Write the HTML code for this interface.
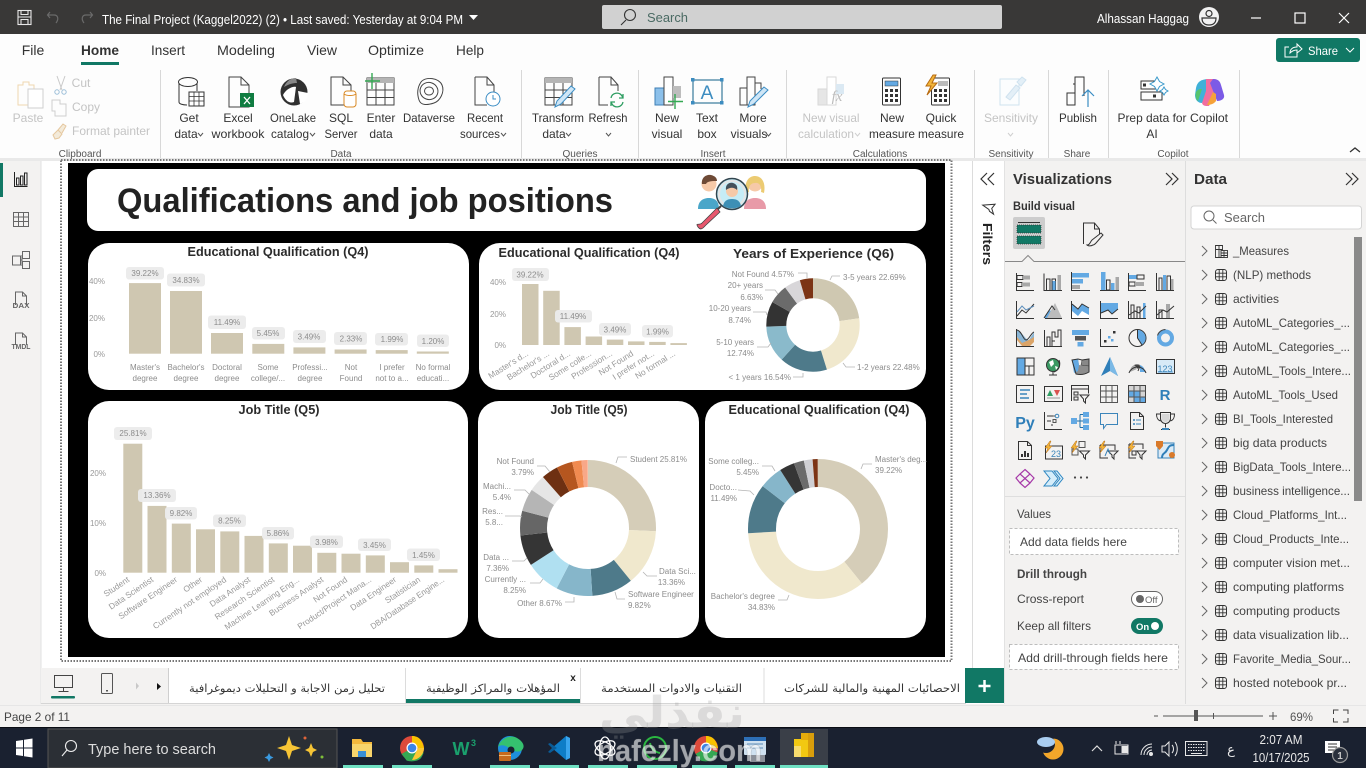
<!DOCTYPE html>
<html lang="en"><head><meta charset="utf-8"><title>Power BI</title>
<style>
html,body{margin:0;padding:0;width:1366px;height:768px;overflow:hidden;background:#fff}
svg{display:block;font-family:"Liberation Sans",sans-serif}
.r{font-size:12px;fill:#333;text-anchor:middle}
.d{font-size:12px;fill:#c4c4c4;text-anchor:middle}
.gp{font-size:10px;fill:#555;text-anchor:middle}
.tab{font-size:14px;fill:#333;text-anchor:middle}
.f{font-size:12px;fill:#444}
.v{font-size:12px;fill:#444}
.ct{font-size:13px;font-weight:bold;fill:#2b2b2b;text-anchor:middle}
.l{font-size:8px;fill:#8c8c8c;text-anchor:middle}
.le{font-size:8px;fill:#8c8c8c;text-anchor:end}
.ls{font-size:8px;fill:#8c8c8c}
.ax{font-size:8px;fill:#999;text-anchor:end}
.rot{font-size:8.4px;fill:#999;text-anchor:end}
.bx{fill:#ececec}
.bar{fill:#cfc7b1}
.ld{fill:none;stroke:#b5b5b5;stroke-width:.8}
.k{fill:none;stroke:#333;stroke-width:1}
.kl{fill:none;stroke:#555;stroke-width:1}
.kd{fill:none;stroke:#cfcfcf;stroke-width:1}
.b{fill:#63a9e3}
.bl{fill:none;stroke:#3e8fc9;stroke-width:1}
.g{fill:#a8a8a8}
.ar{font-family:"DejaVu Sans",sans-serif;font-size:11px;fill:#333;direction:rtl;text-anchor:middle}
.ws{fill:#fff;stroke:none}
.tb{fill:#fff;font-size:12.5px}
</style></head>
<body>
<svg width="1366" height="768" viewBox="0 0 1366 768" xmlns="http://www.w3.org/2000/svg">
<defs>
<symbol id="tbl" viewBox="0 0 12 12"><rect x=".5" y=".5" width="11" height="11" rx="2.5" fill="none" stroke="#333"/><path d="M4.2.5v11M7.8.5v11M.5 4.2h11M.5 7.8h11" fill="none" stroke="#333" stroke-width=".9"/></symbol>
<symbol id="chev" viewBox="0 0 8 12"><path d="M1 1l5 5-5 5" fill="none" stroke="#666"/></symbol>
</defs>

<!-- base -->
<rect width="1366" height="768" fill="#fff"/>
<!-- title bar -->
<rect width="1366" height="34" fill="#393837"/>
<g fill="none" stroke="#e8e8e8" stroke-width="1.1"><rect x="18" y="10.5" width="13" height="14"/><path d="M18 17h13M21 10.5v4h7v-4M21 24.5v-5h7v5"/></g>
<g fill="none" stroke="#6a6a6a" stroke-width="1.2"><path d="M50 12l-2.500 3 2.500 3M48 15h6c4 0 5 4 2 8M90 12l2.500 3-2.500 3M92 15h-6c-4 0-5 4-2 8"/></g>
<text class="tb" x="102" y="24" textLength="361" lengthAdjust="spacingAndGlyphs">The Final Project (Kaggel2022) (2) • Last saved: Yesterday at 9:04 PM</text>
<path d="M469 15h9l-4.500 5z" fill="#fff"/>
<rect x="602" y="5" width="400" height="24" rx="2" fill="#d1d1d1"/>
<circle cx="630" cy="15" r="5.500" fill="none" stroke="#333" stroke-width="1.1"/><path d="M626 20l-5 5" stroke="#333" stroke-width="1.1"/>
<text x="647" y="22" font-size="13" fill="#4a6a63" textLength="41" lengthAdjust="spacingAndGlyphs">Search</text>
<text class="tb" x="1097" y="23" textLength="92" lengthAdjust="spacingAndGlyphs">Alhassan Haggag</text>
<circle cx="1209" cy="17" r="10" fill="#f2f2f2"/><circle cx="1209" cy="13.500" r="3" fill="none" stroke="#333" stroke-width="1.200"/><path d="M1202 18h14c0 5-3 7-7 7s-7-2-7-7z" fill="none" stroke="#333" stroke-width="1.200"/>
<path d="M1251 18h10" stroke="#fff" stroke-width="1.200"/><rect x="1295" y="13" width="10" height="10" fill="none" stroke="#fff" stroke-width="1.200"/><path d="M1339 13l10 10M1349 13l-10 10" stroke="#fff" stroke-width="1.200"/>

<!-- ribbon -->
<rect y="34" width="1366" height="125" fill="#fdfdfd"/>
<rect y="158" width="1366" height="3" fill="#e9e9e9"/>
<text class="tab" x="33" y="55">File</text>
<text class="tab" x="100" y="55" font-weight="bold" textLength="38" lengthAdjust="spacingAndGlyphs">Home</text>
<rect x="81" y="62" width="38" height="3" fill="#117865"/>
<text class="tab" x="168" y="55" textLength="34" lengthAdjust="spacingAndGlyphs">Insert</text>
<text class="tab" x="246" y="55" textLength="58" lengthAdjust="spacingAndGlyphs">Modeling</text>
<text class="tab" x="322" y="55" textLength="30" lengthAdjust="spacingAndGlyphs">View</text>
<text class="tab" x="396" y="55" textLength="56" lengthAdjust="spacingAndGlyphs">Optimize</text>
<text class="tab" x="470" y="55" textLength="28" lengthAdjust="spacingAndGlyphs">Help</text>
<rect x="1276" y="38" width="84" height="24" rx="3" fill="#117865"/>
<g fill="none" stroke="#fff" stroke-width="1"><path d="M1289 47h-4v10h12v-4M1290 53c0-4 3-6 7-6v-3l5 5-5 4v-3c-3 0-5 1-7 3z"/><path d="M1346 48l4 4 4-4"/></g>
<text x="1308" y="55" font-size="12" fill="#fff" textLength="30" lengthAdjust="spacingAndGlyphs">Share</text>
<g stroke="#d8d8d8"><path d="M160.500 70v88M521.500 70v88M638.500 70v88M786.500 70v88M974.500 70v88M1048.500 70v88M1108.500 70v88M1239.500 70v88"/></g>
<g class="gp">
<text class="gp" x="80" y="157">Clipboard</text><text class="gp" x="341" y="157">Data</text><text class="gp" x="580" y="157">Queries</text><text class="gp" x="713" y="157">Insert</text><text class="gp" x="880" y="157">Calculations</text><text class="gp" x="1011" y="157">Sensitivity</text><text class="gp" x="1077" y="157">Share</text><text class="gp" x="1173" y="157">Copilot</text>
</g>
<path d="M1350 152l5-4 5 4" fill="none" stroke="#333" stroke-width="1.300"/>

<!-- ribbon labels -->
<text class="d" x="28" y="122">Paste</text>
<text class="d" x="81" y="87">Cut</text><text class="d" x="86" y="111">Copy</text><text class="d" x="111" y="135" textLength="78" lengthAdjust="spacingAndGlyphs">Format painter</text>
<text class="r" x="189" y="122">Get</text><text class="r" x="186" y="138">data</text><path d="M198 133l2.500 3 2.500-3" class="kl"/>
<text class="r" x="238" y="122">Excel</text><text class="r" x="238" y="138" textLength="53" lengthAdjust="spacingAndGlyphs">workbook</text>
<text class="r" x="293" y="122" textLength="46" lengthAdjust="spacingAndGlyphs">OneLake</text><text class="r" x="290" y="138" textLength="38" lengthAdjust="spacingAndGlyphs">catalog</text><path d="M310 133l2.500 3 2.500-3" class="kl"/>
<text class="r" x="341" y="122">SQL</text><text class="r" x="341" y="138" textLength="33" lengthAdjust="spacingAndGlyphs">Server</text>
<text class="r" x="381" y="122">Enter</text><text class="r" x="381" y="138">data</text>
<text class="r" x="429" y="122" textLength="52" lengthAdjust="spacingAndGlyphs">Dataverse</text>
<text class="r" x="485" y="122" textLength="36" lengthAdjust="spacingAndGlyphs">Recent</text><text class="r" x="480" y="138" textLength="40" lengthAdjust="spacingAndGlyphs">sources</text><path d="M501 133l2.500 3 2.500-3" class="kl"/>
<text class="r" x="558" y="122" textLength="52" lengthAdjust="spacingAndGlyphs">Transform</text><text class="r" x="554" y="138">data</text><path d="M566 133l2.500 3 2.500-3" class="kl"/>
<text class="r" x="608" y="122" textLength="39" lengthAdjust="spacingAndGlyphs">Refresh</text><path d="M606 133l2.500 3 2.500-3" class="kl"/>
<text class="r" x="667" y="122">New</text><text class="r" x="667" y="138">visual</text>
<text class="r" x="707" y="122">Text</text><text class="r" x="707" y="138">box</text>
<text class="r" x="753" y="122">More</text><text class="r" x="749" y="138">visuals</text><path d="M766 133l2.500 3 2.500-3" class="kl"/>
<text class="d" x="831" y="122" textLength="57" lengthAdjust="spacingAndGlyphs">New visual</text><text class="d" x="826" y="138" textLength="56" lengthAdjust="spacingAndGlyphs">calculation</text><path d="M855 133l2.500 3 2.500-3" class="kd"/>
<text class="r" x="892" y="122">New</text><text class="r" x="892" y="138" textLength="46" lengthAdjust="spacingAndGlyphs">measure</text>
<text class="r" x="941" y="122">Quick</text><text class="r" x="941" y="138" textLength="46" lengthAdjust="spacingAndGlyphs">measure</text>
<text class="d" x="1011" y="122" textLength="54" lengthAdjust="spacingAndGlyphs">Sensitivity</text><path d="M1008 133l2.500 3 2.500-3" class="kd"/>
<text class="r" x="1078" y="122" textLength="38" lengthAdjust="spacingAndGlyphs">Publish</text>
<text class="r" x="1152" y="122" textLength="69" lengthAdjust="spacingAndGlyphs">Prep data for</text><text class="r" x="1152" y="138">AI</text>
<text class="r" x="1209" y="122" textLength="38" lengthAdjust="spacingAndGlyphs">Copilot</text>

<!-- ribbon icons -->
<g fill="none" stroke-width="1">
 <!-- paste -->
 <path d="M18 85h5v-3h6v3h5v20H18z" stroke="#f0d7b0"/><rect x="29" y="90" width="15" height="19" stroke="#cfcfcf" fill="#fff" transform="translate(-1 -1)"/>
 <!-- cut, copy, painter -->
 <path d="M57 76l5 14M65 76l-5 14" stroke="#c9c9c9"/><circle cx="57" cy="92" r="2.200" stroke="#9dbfd9"/><circle cx="64" cy="92" r="2.200" stroke="#9dbfd9"/>
 <path d="M52 101h8v4h6v12H55v-5h-3z" stroke="#cfcfcf" transform="translate(0 -1)"/>
 <path d="M53 135l5-5 4 4-3 4-4 1zM58 130l5-6 3 2-4 7" stroke="#e5c79e" fill="#f3ead9"/>
 <!-- get data -->
 <path d="M179 83v19c0 2 4 3 8 3M197 83v8" stroke="#333"/><ellipse cx="188" cy="82" rx="9.500" ry="4.500" stroke="#333"/><rect x="189" y="92" width="15" height="14" stroke="#333" fill="#fff"/><path d="M189 96.500h15M189 101h15M194 92v14M199 92v14" stroke="#333" stroke-width=".8"/>
 <!-- excel -->
 <path d="M229 77h12l8 8v22h-20zM241 77v8h8" stroke="#444"/><rect x="240" y="93" width="14" height="14" fill="#107c41"/><path d="M244 97l6 7M250 97l-6 7" stroke="#fff" stroke-width="1.300"/>
 <!-- onelake -->
 <circle cx="294" cy="92" r="13.500" fill="#303030"/><path d="M283 95c3-6 10-9 13-8l-2 15c-5 2-9-2-11-7z" fill="#fff"/><path d="M298 91l10 2c0 5-3 9-8 11z" fill="#fff"/><path d="M296 78c-6 0-10 4-12 9 5-3 9-4 13-4z" fill="#888"/>
 <!-- sql -->
 <path d="M331 77h12l8 8v20h-20zM343 77v8h8" stroke="#444"/><rect x="344" y="91" width="12" height="16" rx="3" stroke="#d98a26" fill="#fff"/><path d="M344 94c3 2 9 2 12 0" stroke="#d98a26"/>
 <!-- enter data -->
 <rect x="367" y="78" width="27" height="27" stroke="#444"/><rect x="367" y="78" width="27" height="5" fill="#b5b5b5"/><path d="M367 90h27M367 97.500h27M376 83v22M385 83v22" stroke="#444"/><path d="M372 73v16M365 81h15" stroke="#34a853" stroke-width="1.400"/>
 <!-- dataverse -->
 <path d="M421 82c5-6 18-4 21 3s-2 16-8 18-13 3-15-3-2-12 2-18z" stroke="#444"/><ellipse cx="429" cy="91" rx="9" ry="8.500" stroke="#444" transform="rotate(20 429 91)"/><ellipse cx="429" cy="91" rx="4.500" ry="4" stroke="#444"/>
 <!-- recent -->
 <path d="M475 77h12l7 8v9M475 77v28h12M487 77v8h7" stroke="#444"/><circle cx="493" cy="99" r="7" stroke="#3b8dc4" fill="#fff"/><path d="M493 95v4h3" stroke="#3b8dc4"/>
 <!-- transform -->
 <rect x="545" y="78" width="27" height="27" stroke="#444"/><rect x="545" y="78" width="27" height="5" fill="#b5b5b5"/><path d="M545 90h27M545 97.500h27M554 83v22M563 83v22" stroke="#444"/><path d="M571 86l4 3-14 15-6 3 2-6z" stroke="#3b8dc4" fill="#cfe6f6"/>
 <!-- refresh -->
 <path d="M599 77h12l7 8v6M599 77v28h9M611 77v8h7" stroke="#444"/><path d="M611 98a6 6 0 0 1 11-2l1 2M623 102a6 6 0 0 1-11 2l-1-2M623 94v4h-4M611 106v-4h4" stroke="#2f9e62" stroke-width="1.300"/>
 <!-- new visual -->
 <rect x="655" y="88" width="9" height="17" fill="#8cc0ea" stroke="#3e7fb5"/><rect x="664" y="77" width="9" height="28" stroke="#444" fill="#fff"/><rect x="673" y="86" width="8" height="12" fill="#bdbdbd"/><path d="M675 94v15M668 101.500h15" stroke="#34a853" stroke-width="1.400"/>
 <!-- text box -->
 <rect x="693" y="80" width="29" height="23" stroke="#0f5f88"/><g fill="#3c8cc0"><rect x="691" y="78" width="3.500" height="3.500"/><rect x="720" y="78" width="3.500" height="3.500"/><rect x="691" y="101" width="3.500" height="3.500"/><rect x="720" y="101" width="3.500" height="3.500"/></g>
 <!-- more visuals -->
 <path d="M740 105V88h7v17zM747 105V77h8v28zM755 92v-9h6v6" stroke="#444"/><path d="M764 87l4 3-14 14-6 3 2-6z" stroke="#3b8dc4" fill="#cfe6f6"/>
 <!-- new visual calc -->
 <rect x="818" y="89" width="9" height="16" fill="#e6e6e6" stroke="#d8d8d8"/><rect x="827" y="77" width="9" height="28" fill="#fff" stroke="#d8d8d8"/><rect x="836" y="84" width="8" height="10" fill="#dbe9f3"/>
 <!-- new measure -->
 <rect x="882.500" y="78" width="18" height="27" rx="1" stroke="#333"/><rect x="885" y="81" width="13" height="5" fill="#63a9e3" stroke="#333" stroke-width=".5"/>
 <g fill="#333" stroke="none"><rect x="885" y="89" width="3" height="3"/><rect x="890" y="89" width="3" height="3"/><rect x="895" y="89" width="3" height="3"/><rect x="885" y="94" width="3" height="3"/><rect x="890" y="94" width="3" height="3"/><rect x="895" y="94" width="3" height="3"/><rect x="885" y="99" width="3" height="3"/><rect x="890" y="99" width="3" height="3"/><rect x="895" y="99" width="3" height="3"/></g>
 <!-- quick measure -->
 <rect x="931.500" y="78" width="18" height="27" rx="1" stroke="#333"/><rect x="938" y="81" width="10" height="5" fill="#bbb"/>
 <g fill="#333" stroke="none"><rect x="934" y="89" width="3" height="3"/><rect x="939" y="89" width="3" height="3"/><rect x="944" y="89" width="3" height="3"/><rect x="934" y="94" width="3" height="3"/><rect x="939" y="94" width="3" height="3"/><rect x="944" y="94" width="3" height="3"/><rect x="934" y="99" width="3" height="3"/><rect x="939" y="99" width="3" height="3"/><rect x="944" y="99" width="3" height="3"/></g>
 <path d="M933 75l-7 11h5l-4 9 10-12h-5l4-8z" fill="#f2b53a" stroke="#b76a10"/>
 <!-- sensitivity -->
 <rect x="1000" y="79" width="19" height="26" stroke="#cfe2ef" fill="#fbfdfe"/><path d="M1006 97l10-12 4 3-10 12zM1017 82l5-5 4 3-5 6z" stroke="#cfe2ef" fill="#e3eff7"/>
 <!-- publish -->
 <path d="M1067 105V93h8v12zM1075 105V77h9v19M1075 84h-2" stroke="#333"/><path d="M1088 107V90M1082 96l6-6 6 6" stroke="#3b8dc4" stroke-width="1.200"/>
 <!-- prep data -->
 <rect x="1141" y="81" width="15" height="8" stroke="#333"/><rect x="1141" y="92" width="21" height="8" stroke="#333"/><rect x="1143" y="83.500" width="3" height="3" fill="#333"/><rect x="1153" y="94.500" width="3" height="3" fill="#333"/>
 <path d="M1157 77l2.500 4.500 4.500 2.500-4.500 2.500-2.500 4.500-2.500-4.500-4.500-2.500 4.500-2.500z" stroke="#3b9acb" fill="#fff"/><path d="M1164 87l1.500 2.500 2.500 1.500-2.500 1.500-1.500 2.500-1.500-2.500-2.500-1.500 2.500-1.500z" stroke="#3b9acb" fill="#fff"/>
 <!-- copilot -->
 <path d="M1209 79c-8 0-12 3-13 9l-1 7c0 5 3 8 7 8l8-14 4-10z" fill="#3fb1d8" stroke="none"/><path d="M1206 79h8c3 0 4 2 5 5l-10 22c-4 0-6 0-7-3l4-12z" fill="#f06ea0" stroke="none"/><path d="M1213 79c5 0 7 2 8 6l3 10c1 4-3 6-7 6l-7-18z" fill="#7c5be6" stroke="none"/><path d="M1196 92c2-3 4-3 6-3l-4 12c-2-1-3-5-2-9z" fill="#56c46e" stroke="none"/><path d="M1216 101c-2 3-6 4-9 4l6-13 3 2z" fill="#f6a23a" stroke="none"/>
</g>
<text x="707" y="99" font-size="19" fill="#3c8cc0" text-anchor="middle">A</text>
<text x="837" y="101" font-size="15" font-family="Liberation Serif" font-style="italic" fill="#bcbcbc" text-anchor="middle">fx</text>

<!-- left rail -->
<rect x="0" y="161" width="41" height="544" fill="#f3f2f1"/><rect x="40.500" y="161" width="1" height="544" fill="#e2e2e2"/>
<rect x="0" y="163" width="3" height="34" fill="#117865"/>
<g fill="none" stroke="#222" stroke-width="1"><path d="M14.500 172v14.500h13"/><rect x="16.500" y="178" width="2.500" height="7"/><rect x="20.500" y="176" width="2.500" height="9"/><rect x="24.500" y="173" width="2.500" height="12"/></g>
<g fill="none" stroke="#666" stroke-width="1"><rect x="13.500" y="212.500" width="15" height="14"/><path d="M13.500 217h15M13.500 221.500h15M18.500 212.500v14M23.500 212.500v14"/>
<rect x="12.500" y="256" width="8" height="9"/><rect x="22.500" y="251.500" width="7" height="7"/><rect x="22.500" y="261.500" width="7" height="7"/><path d="M20 260h2.500M22 255v11"/>
<path d="M15.500 305v-13h7l4 4v10M22.500 292v4h4"/><path d="M15.500 345v-12h7l4 4v8M22.500 333v4h4"/></g>
<text x="21" y="308" font-size="7" fill="#666" text-anchor="middle" font-weight="bold" textLength="17" lengthAdjust="spacingAndGlyphs">DAX</text>
<text x="21" y="349" font-size="7" fill="#666" text-anchor="middle" font-weight="bold" textLength="19" lengthAdjust="spacingAndGlyphs">TMDL</text>

<!-- report frame -->
<rect x="61" y="160" width="890.500" height="501" fill="none" stroke="#777" stroke-width="2" stroke-dasharray="1.500 1.500"/>
<rect x="68" y="163" width="877" height="494" fill="#000"/>

<!-- title card -->
<rect x="87" y="169" width="839" height="62" rx="11" fill="#fff"/>
<text x="117" y="212" font-size="34" font-weight="bold" fill="#222" textLength="496" lengthAdjust="spacingAndGlyphs">Qualifications and job positions</text>
<!-- people icon -->
<g>
 <circle cx="709" cy="184" r="7.500" fill="#f6c9a8"/><path d="M702 184c-1-7 5-10 9-9s6 3 6 6c-4 0-10 0-11 3z" fill="#6e4a36"/>
 <path d="M698 209c0-8 5-11 11-11s10 3 10 11z" fill="#4aa6c9"/>
 <circle cx="755" cy="184" r="7.500" fill="#f6c9a8"/><path d="M746 193c-2-10 2-17 9-17s11 7 9 17l-3-1c1-6-2-10-6-9-4 0-7 3-6 9z" fill="#eccb72"/>
 <path d="M744 209c0-8 5-11 11-11s11 3 11 11z" fill="#e89aa8"/>
 <circle cx="732" cy="194" r="15.500" fill="#c6ecf6" stroke="#33454f" stroke-width="1.500"/><circle cx="732" cy="194" r="13" fill="none" stroke="#e5e5e5" stroke-width="2"/>
 <circle cx="732" cy="191" r="6" fill="#f6c9a8"/><path d="M726 190c-1-6 4-8 7-7s5 3 4 7c-3-3-7-3-11 0z" fill="#44505a"/><path d="M723 206c1-5 4-7 9-7s8 2 9 7c-5 3-13 3-18 0z" fill="#3d8fb5"/>
 <path d="M721 206l-3 3" stroke="#444" stroke-width="2"/><path d="M717 208l-15 15c-3 3-7-1-4 4 3 4 5 1 8-2l14-13z" fill="#e8576e" stroke="#444" stroke-width=".8"/>
</g>

<!-- cards -->
<g fill="#fff">
 <rect x="88" y="243" width="381" height="147" rx="21"/>
 <rect x="479" y="243" width="447" height="147" rx="21"/>
 <rect x="88" y="401" width="380" height="237" rx="21"/>
 <rect x="478" y="401" width="221" height="237" rx="21"/>
 <rect x="705" y="401" width="221" height="237" rx="21"/>
</g>
<text class="ct" x="278" y="256" textLength="181" lengthAdjust="spacingAndGlyphs">Educational Qualification (Q4)</text>
<text class="ct" x="589" y="257" textLength="181" lengthAdjust="spacingAndGlyphs">Educational Qualification (Q4)</text>
<text class="ct" x="813.500" y="258" font-size="14" textLength="161" lengthAdjust="spacingAndGlyphs">Years of Experience (Q6)</text>
<text class="ct" x="279" y="414" textLength="81" lengthAdjust="spacingAndGlyphs">Job Title (Q5)</text>
<text class="ct" x="589" y="414" textLength="77" lengthAdjust="spacingAndGlyphs">Job Title (Q5)</text>
<text class="ct" x="819" y="414" textLength="181" lengthAdjust="spacingAndGlyphs">Educational Qualification (Q4)</text>

<!-- card 1 chart -->
<text class="ax" x="105" y="284">40%</text><text class="ax" x="105" y="321">20%</text><text class="ax" x="105" y="357">0%</text>
<g class="bar">
<rect x="129" y="283.100" width="32" height="70.600"/><rect x="170" y="291" width="32" height="62.700"/><rect x="211" y="333" width="32" height="20.700"/><rect x="252.300" y="343.900" width="32" height="9.800"/><rect x="293.400" y="347.400" width="32" height="6.300"/><rect x="334.600" y="349.500" width="32" height="4.200"/><rect x="375.700" y="350.100" width="32" height="3.600"/><rect x="416.800" y="351.500" width="32" height="2.200"/>
</g>
<g class="bx">
<rect x="126" y="267" width="38" height="12.500" rx="3"/><rect x="167" y="273.500" width="38" height="13" rx="3"/><rect x="208" y="315.500" width="38" height="13.500" rx="3"/><rect x="252" y="327" width="33" height="12.500" rx="3"/><rect x="293" y="330" width="33" height="13" rx="3"/><rect x="334" y="332" width="33" height="13" rx="3"/><rect x="375" y="333" width="33" height="12.500" rx="3"/><rect x="417" y="334.500" width="32" height="12.500" rx="3"/>
</g>
<text class="l" x="145" y="276">39.22%</text><text class="l" x="186" y="283">34.83%</text><text class="l" x="227" y="325">11.49%</text><text class="l" x="268" y="336">5.45%</text><text class="l" x="309" y="339.500">3.49%</text><text class="l" x="351" y="341.500">2.33%</text><text class="l" x="392" y="342">1.99%</text><text class="l" x="433" y="344">1.20%</text>
<g class="l">
<text class="l" x="145" y="370">Master's</text><text class="l" x="145" y="381">degree</text>
<text class="l" x="186" y="370">Bachelor's</text><text class="l" x="186" y="381">degree</text>
<text class="l" x="227" y="370">Doctoral</text><text class="l" x="227" y="381">degree</text>
<text class="l" x="268" y="370">Some</text><text class="l" x="268" y="381">college/...</text>
<text class="l" x="310" y="370">Professi...</text><text class="l" x="310" y="381">degree</text>
<text class="l" x="351" y="370">Not</text><text class="l" x="351" y="381">Found</text>
<text class="l" x="392" y="370">I prefer</text><text class="l" x="392" y="381">not to a...</text>
<text class="l" x="433" y="370">No formal</text><text class="l" x="433" y="381">educati...</text>
</g>

<!-- card 2 chart -->
<text class="ax" x="506" y="285">40%</text><text class="ax" x="506" y="317">20%</text><text class="ax" x="506" y="348">0%</text>
<g class="bar">
<rect x="522" y="284" width="16.500" height="61"/><rect x="543.200" y="290.800" width="16.500" height="54.200"/><rect x="564.400" y="327.100" width="16.500" height="17.900"/><rect x="585.600" y="336.500" width="16.500" height="8.500"/><rect x="606.800" y="339.600" width="16.500" height="5.400"/><rect x="628" y="341.400" width="16.500" height="3.600"/><rect x="649.200" y="341.900" width="16.500" height="3.100"/><rect x="670.400" y="343.100" width="16.500" height="1.900"/>
</g>
<g class="bx" opacity=".95"><rect x="512" y="268" width="37" height="13" rx="3"/><rect x="555" y="310" width="37" height="12.500" rx="3"/><rect x="599" y="323" width="32" height="12.500" rx="3"/><rect x="642" y="325" width="31" height="12.500" rx="3"/></g>
<text class="l" x="530" y="277.500">39.22%</text><text class="l" x="573" y="319">11.49%</text><text class="l" x="615" y="332.500">3.49%</text><text class="l" x="657.500" y="334.500">1.99%</text>
<text class="rot" transform="translate(529 355) rotate(-32)">Master's d...</text>
<text class="rot" transform="translate(550 355) rotate(-32)">Bachelor's ...</text>
<text class="rot" transform="translate(571 355) rotate(-32)">Doctoral d...</text>
<text class="rot" transform="translate(592 355) rotate(-32)">Some colle...</text>
<text class="rot" transform="translate(613 355) rotate(-32)">Profession...</text>
<text class="rot" transform="translate(634 355) rotate(-32)">Not Found</text>
<text class="rot" transform="translate(655 355) rotate(-32)">I prefer not...</text>
<text class="rot" transform="translate(676 355) rotate(-32)">No formal ...</text>

<!-- card 2 donut -->
<g fill="none" stroke-width="20" transform="rotate(-90 813 325)">
<circle cx="813" cy="325" r="36.700" pathLength="100" stroke="#cfc8b1" stroke-dasharray="22.69 100"/>
<circle cx="813" cy="325" r="36.700" pathLength="100" stroke="#f0e8cd" stroke-dasharray="22.48 100" stroke-dashoffset="-22.69"/>
<circle cx="813" cy="325" r="36.700" pathLength="100" stroke="#4e7a8a" stroke-dasharray="16.54 100" stroke-dashoffset="-45.17"/>
<circle cx="813" cy="325" r="36.700" pathLength="100" stroke="#8abacb" stroke-dasharray="12.74 100" stroke-dashoffset="-61.71"/>
<circle cx="813" cy="325" r="36.700" pathLength="100" stroke="#333333" stroke-dasharray="8.74 100" stroke-dashoffset="-74.45"/>
<circle cx="813" cy="325" r="36.700" pathLength="100" stroke="#6b6b6b" stroke-dasharray="6.63 100" stroke-dashoffset="-83.19"/>
<circle cx="813" cy="325" r="36.700" pathLength="100" stroke="#d8d6d9" stroke-dasharray="5.61 100" stroke-dashoffset="-89.82"/>
<circle cx="813" cy="325" r="36.700" pathLength="100" stroke="#7c3415" stroke-dasharray="4.57 100" stroke-dashoffset="-95.43"/>
</g>
<path class="ld" d="M830 280l2-4h8M798 273h9v5M765 290h10l3 4M753 312h13l1 3M757 347h11l3-4M793 377h10v-4M843 363l3 4h9"/>
<text class="le" x="794" y="277">Not Found 4.57%</text>
<text class="le" x="763" y="288">20+ years</text><text class="le" x="763" y="300">6.63%</text>
<text class="le" x="751" y="311">10-20 years</text><text class="le" x="751" y="323">8.74%</text>
<text class="le" x="754" y="345">5-10 years</text><text class="le" x="754" y="356">12.74%</text>
<text class="le" x="791" y="380">&lt; 1 years 16.54%</text>
<text class="ls" x="843" y="280">3-5 years 22.69%</text>
<text class="ls" x="857" y="370">1-2 years 22.48%</text>

<!-- card 3 chart -->
<text class="ax" x="106" y="476">20%</text><text class="ax" x="106" y="526">10%</text><text class="ax" x="106" y="576">0%</text>
<g class="bar">
<rect x="123.300" y="443.700" width="19" height="129"/><rect x="147.500" y="505.900" width="19" height="66.800"/><rect x="171.800" y="523.600" width="19" height="49.100"/><rect x="196" y="529.300" width="19" height="43.400"/><rect x="220.300" y="531.400" width="19" height="41.300"/><rect x="244.500" y="535.900" width="19" height="36.800"/><rect x="268.800" y="543.400" width="19" height="29.300"/><rect x="293" y="545.700" width="19" height="27"/><rect x="317.300" y="552.800" width="19" height="19.900"/><rect x="341.500" y="553.700" width="19" height="19"/><rect x="365.800" y="555.400" width="19" height="17.300"/><rect x="390" y="562.200" width="19" height="10.500"/><rect x="414.300" y="565.400" width="19" height="7.300"/><rect x="438.500" y="569.200" width="19" height="3.500"/>
</g>
<g class="bx" opacity=".95"><rect x="114" y="427" width="38" height="13" rx="3"/><rect x="138" y="489" width="38" height="13" rx="3"/><rect x="165" y="507" width="32" height="12.500" rx="3"/><rect x="213" y="514.500" width="33" height="12.500" rx="3"/><rect x="262" y="527" width="32" height="12.500" rx="3"/><rect x="310" y="535.500" width="33" height="12.500" rx="3"/><rect x="358" y="538.500" width="33" height="12.500" rx="3"/><rect x="407" y="548.500" width="33" height="12.500" rx="3"/></g>
<text class="l" x="133" y="436">25.81%</text><text class="l" x="157" y="498">13.36%</text><text class="l" x="181" y="516">9.82%</text><text class="l" x="229.500" y="523.500">8.25%</text><text class="l" x="278" y="536">5.86%</text><text class="l" x="326.500" y="545">3.98%</text><text class="l" x="374.500" y="548">3.45%</text><text class="l" x="423.500" y="558">1.45%</text>
<text class="rot" transform="translate(130 581) rotate(-34)">Student</text>
<text class="rot" transform="translate(154 581) rotate(-34)">Data Scientist</text>
<text class="rot" transform="translate(178 581) rotate(-34)">Software Engineer</text>
<text class="rot" transform="translate(203 581) rotate(-34)">Other</text>
<text class="rot" transform="translate(227 581) rotate(-34)">Currently not employed</text>
<text class="rot" transform="translate(251 581) rotate(-34)">Data Analyst</text>
<text class="rot" transform="translate(275 581) rotate(-34)">Research Scientist</text>
<text class="rot" transform="translate(300 581) rotate(-34)" textLength="88" lengthAdjust="spacingAndGlyphs">Machine Learning Eng...</text>
<text class="rot" transform="translate(324 581) rotate(-34)">Business Analyst</text>
<text class="rot" transform="translate(348 581) rotate(-34)">Not Found</text>
<text class="rot" transform="translate(372 581) rotate(-34)" textLength="87" lengthAdjust="spacingAndGlyphs">Product/Project Mana...</text>
<text class="rot" transform="translate(397 581) rotate(-34)">Data Engineer</text>
<text class="rot" transform="translate(421 581) rotate(-34)">Statistician</text>
<text class="rot" transform="translate(445 581) rotate(-34)" textLength="87" lengthAdjust="spacingAndGlyphs">DBA/Database Engine...</text>

<!-- card 4 donut -->
<g fill="none" stroke-width="27" transform="rotate(-90 588 528)">
<circle cx="588" cy="528" r="54.500" pathLength="100" stroke="#d5cdb8" stroke-dasharray="25.81 100"/>
<circle cx="588" cy="528" r="54.500" pathLength="100" stroke="#f0e8cd" stroke-dasharray="13.36 100" stroke-dashoffset="-25.81"/>
<circle cx="588" cy="528" r="54.500" pathLength="100" stroke="#4e7a8a" stroke-dasharray="9.82 100" stroke-dashoffset="-39.17"/>
<circle cx="588" cy="528" r="54.500" pathLength="100" stroke="#86b6ca" stroke-dasharray="8.67 100" stroke-dashoffset="-48.99"/>
<circle cx="588" cy="528" r="54.500" pathLength="100" stroke="#b0e0f1" stroke-dasharray="8.25 100" stroke-dashoffset="-57.66"/>
<circle cx="588" cy="528" r="54.500" pathLength="100" stroke="#353535" stroke-dasharray="7.36 100" stroke-dashoffset="-65.91"/>
<circle cx="588" cy="528" r="54.500" pathLength="100" stroke="#666666" stroke-dasharray="5.86 100" stroke-dashoffset="-73.27"/>
<circle cx="588" cy="528" r="54.500" pathLength="100" stroke="#b5b5b5" stroke-dasharray="5.4 100" stroke-dashoffset="-79.13"/>
<circle cx="588" cy="528" r="54.500" pathLength="100" stroke="#e6e6e6" stroke-dasharray="4 100" stroke-dashoffset="-84.53"/>
<circle cx="588" cy="528" r="54.500" pathLength="100" stroke="#6e3012" stroke-dasharray="3.98 100" stroke-dashoffset="-88.53"/>
<circle cx="588" cy="528" r="54.500" pathLength="100" stroke="#b5561f" stroke-dasharray="3.79 100" stroke-dashoffset="-92.51"/>
<circle cx="588" cy="528" r="54.500" pathLength="100" stroke="#f08a50" stroke-dasharray="2.2 100" stroke-dashoffset="-96.3"/>
<circle cx="588" cy="528" r="54.500" pathLength="100" stroke="#f8a888" stroke-dasharray="1.5 100" stroke-dashoffset="-98.5"/>
</g>
<path class="ld" d="M616 463l2-6h9M643 572l4 4h10M615 592l2 7h8M565 602h9v-5M530 583h10l3-4M512 561h12l3-3M505 516h15l2 1M514 490h11l4 4M537 466h8l5 6"/>
<text class="ls" x="630" y="462">Student 25.81%</text>
<text class="ls" x="659" y="574">Data Sci...</text><text class="le" x="685" y="585">13.36%</text>
<text class="ls" x="628" y="597">Software Engineer</text><text class="ls" x="628" y="608">9.82%</text>
<text class="le" x="562" y="606">Other 8.67%</text>
<text class="le" x="526" y="582">Currently ...</text><text class="le" x="526" y="593">8.25%</text>
<text class="le" x="509" y="560">Data ...</text><text class="le" x="509" y="571">7.36%</text>
<text class="le" x="503" y="514">Res...</text><text class="le" x="503" y="525">5.8...</text>
<text class="le" x="511" y="489">Machi...</text><text class="le" x="511" y="500">5.4%</text>
<text class="le" x="534" y="464">Not Found</text><text class="le" x="534" y="475">3.79%</text>

<!-- card 5 donut -->
<g fill="none" stroke-width="28" transform="rotate(-90 818 529)">
<circle cx="818" cy="529" r="56" pathLength="100" stroke="#d5cdb8" stroke-dasharray="39.22 100"/>
<circle cx="818" cy="529" r="56" pathLength="100" stroke="#f0e8cd" stroke-dasharray="34.83 100" stroke-dashoffset="-39.22"/>
<circle cx="818" cy="529" r="56" pathLength="100" stroke="#4e7a8a" stroke-dasharray="11.49 100" stroke-dashoffset="-74.05"/>
<circle cx="818" cy="529" r="56" pathLength="100" stroke="#86b6ca" stroke-dasharray="5.45 100" stroke-dashoffset="-85.54"/>
<circle cx="818" cy="529" r="56" pathLength="100" stroke="#353535" stroke-dasharray="3.49 100" stroke-dashoffset="-90.99"/>
<circle cx="818" cy="529" r="56" pathLength="100" stroke="#6b6b6b" stroke-dasharray="2.33 100" stroke-dashoffset="-94.48"/>
<circle cx="818" cy="529" r="56" pathLength="100" stroke="#cfcfd3" stroke-dasharray="1.99 100" stroke-dashoffset="-96.81"/>
<circle cx="818" cy="529" r="56" pathLength="100" stroke="#7c3415" stroke-dasharray="1.2 100" stroke-dashoffset="-98.8"/>
</g>
<path class="ld" d="M861 469l2-5h9M762 466h10l3 5M738 490l12 1 4 4M778 600h9l2-5"/>
<text class="ls" x="875" y="462">Master's deg...</text><text class="ls" x="875" y="473">39.22%</text>
<text class="le" x="759" y="464">Some colleg...</text><text class="le" x="759" y="475">5.45%</text>
<text class="le" x="737" y="490">Docto...</text><text class="le" x="737" y="501">11.49%</text>
<text class="le" x="775" y="599">Bachelor's degree</text><text class="le" x="775" y="610">34.83%</text>

<!-- filters pane -->
<rect x="972" y="161" width="1" height="507" fill="#dcdcdc"/>
<path d="M987 173l-6 6 6 6M994 173l-6 6 6 6" fill="none" stroke="#333" stroke-width="1.200"/>
<path d="M984 203l12 3-4.500 3v6l-3-4v-2z" fill="none" stroke="#333" transform="rotate(-18 990 208)"/>
<text transform="translate(983 223) rotate(90)" font-size="13" font-weight="bold" fill="#222" textLength="42" lengthAdjust="spacingAndGlyphs">Filters</text>

<!-- visualizations pane -->
<rect x="1004" y="161" width="182" height="544" fill="#f3f2f1"/>
<rect x="1004" y="161" width="1" height="544" fill="#e2e2e2"/>
<rect x="1185" y="161" width="1" height="544" fill="#dddddd"/>
<text x="1013" y="184" font-size="15" font-weight="bold" fill="#333" textLength="99" lengthAdjust="spacingAndGlyphs">Visualizations</text>
<path d="M1166 173l6 6-6 6M1172 173l6 6-6 6" fill="none" stroke="#333" stroke-width="1.200"/>
<text x="1013" y="210" font-size="11.500" font-weight="bold" fill="#333" textLength="62" lengthAdjust="spacingAndGlyphs">Build visual</text>
<rect x="1013" y="217" width="32" height="32" rx="2" fill="#cdcdcd"/>
<path d="M1018 222.500h22" stroke="#333"/><rect x="1017" y="225" width="24" height="8" fill="#117865" stroke="#333" stroke-dasharray="1 1" stroke-width=".7"/><rect x="1017" y="236" width="24" height="8" fill="#117865" stroke="#333" stroke-dasharray="1 1" stroke-width=".7"/>
<path d="M1083.500 244v-21h11l5 6v5M1094.500 223v6h5M1093 245c-4 2-6 0-6 0 3 0 3-3 5-5l9-7 2 2-7 8c-1 1-2 2-3 2z" fill="none" stroke="#333"/>
<path d="M1005 261.500h17l6-6 6 6h151" fill="none" stroke="#888"/>
<rect x="1005" y="496" width="180" height="1" fill="#dedede"/>

<!-- gallery icons -->
<g transform="translate(1016 273)"><path class="k" d="M.5 0v17.500H18"/><path class="k" d="M1 2.500h6v4H1zM1 9.500h5v4H1z"/><rect class="g" x="7" y="2.500" width="7" height="4"/><rect class="g" x="6" y="9.500" width="8" height="4"/></g>
<g transform="translate(1044 273)"><path class="k" d="M0 .5v17h18M2.500 17V6h3.500v11M8 17V6h3.500v11"/><rect class="b" x="8.500" y="8" width="3" height="9"/><rect class="g" x="13.500" y="2" width="3.500" height="15"/></g>
<g transform="translate(1071 272)"><path class="k" d="M.5 0v18.500H19" stroke-width="2"/><rect class="b" x="1" y="1" width="17" height="4.500" /><rect class="b" x="1" y="7" width="11" height="4.500"/><rect class="g" x="1" y="13" width="8" height="4"/></g>
<g transform="translate(1100 272)"><rect class="b" x="1" y="0" width="4.500" height="18"/><rect class="k" x="6.500" y="8" width="3.500" height="10"/><rect class="b" x="11" y="11" width="3.500" height="7"/><rect class="g" x="15.500" y="5" width="3.500" height="13"/><path class="k" d="M0 18.500h19"/></g>
<g transform="translate(1128 273)"><path class="k" d="M.5 0v17.500H18"/><rect class="b" x="1" y="2" width="8" height="4"/><rect class="k" x="9" y="2" width="7" height="4"/><rect class="k" x="1" y="9" width="6" height="4"/><rect class="g" x="7" y="9" width="9" height="4"/></g>
<g transform="translate(1156 273)"><path class="k" d="M.5 0v17.500H18M3 17V5h3v12M11 17V3h3.500v14"/><rect class="b" x="7" y="2" width="3" height="15"/><rect class="g" x="15" y="6" width="2.500" height="11"/></g>

<g transform="translate(1016 301)"><path class="k" d="M.5 0v17.500H18M1 15l5-6 4 3 8-9"/><path d="M1 11l5-6 4 4 8-4" fill="none" stroke="#5f90bd"/></g>
<g transform="translate(1044 301)"><path d="M0 17l6-8 5 8z" class="b"/><path d="M3 17l8-15 7 15z" fill="#bcbcbc"/><path d="M1 17.500h17" class="k"/><path class="k" d="M0 17l8-12 3 4"/></g>
<g transform="translate(1071 301)"><path class="b" d="M1 3l6 5 4-5 7 4v10H1z"/><path d="M1 10l6 5 4-5 7 4v3H1z" fill="#fff"/><path class="k" d="M.5 0v17.500H18M1 3l6 5 4-5 7 4"/></g>
<g transform="translate(1100 301)"><path class="b" d="M1 2h17v6l-6 5-4-4-7 3z"/><path class="k" d="M.5 0v17.500H18M1 12l7-3 4 4 6-5"/></g>
<g transform="translate(1128 301)"><path class="k" d="M.5 0v17.500H18M3 17V4h3v13M9 17V6h3v11"/><rect class="b" x="15" y="2" width="2.500" height="15"/><path class="k" d="M1 14l6-4 4 2 7-7"/></g>
<g transform="translate(1156 301)"><path class="k" d="M.5 0v17.500H18M3 17V9h3v8"/><rect class="g" x="10" y="3" width="4" height="14"/><path class="k" d="M1 14l6-5 4 2 7-6"/></g>

<g transform="translate(1016 329)"><path class="k" d="M.5 0v17.500H18"/><path d="M1 1l4 3c3 2 5 7 8 7l5-8v5l-3 8H8C4 16 2 8 1 8z" fill="#8ab6d6"/><path d="M1 8l5 6 7-3 5-3v5l-4 4H6L1 11z" fill="#dba468"/><path d="M1 1c5 1 6 10 9 10s5-7 8-8" fill="none" stroke="#333"/></g>
<g transform="translate(1044 329)"><path class="k" d="M.5 1v16.500H18M3 17V8h3v9M8 17V3h3v5h3V1h3v16M8 12h3"/></g>
<g transform="translate(1071 329)"><rect class="b" x="1" y="1" width="17" height="5"/><path d="M4 7h11v4.500H4z" fill="#555"/><rect class="b" x="6.500" y="13" width="6" height="4.500"/></g>
<g transform="translate(1100 329)"><path class="k" d="M.5 0v17.500H18"/><rect x="4" y="11" width="2.500" height="2.500" fill="#333"/><rect x="8" y="7" width="2.500" height="2.500" class="b"/><rect x="11" y="10" width="2.500" height="2.500" class="b"/><rect x="13" y="2" width="2.500" height="2.500" fill="#333"/></g>
<g transform="translate(1128 329)"><circle class="k" cx="9.500" cy="9" r="8.500"/><path class="b" d="M9.500 9V1a8 8 0 0 1 4 15z"/><path class="k" d="M9.500 1v8l4.500 7"/></g>
<g transform="translate(1156 329)"><circle cx="9.500" cy="9" r="6.500" fill="none" stroke="#63a9e3" stroke-width="4"/><path d="M9.500 .5a8.500 8.500 0 0 0-8 6" fill="none" stroke="#444"/></g>

<g transform="translate(1016 357)"><rect class="b" x="1" y="1" width="8" height="17"/><rect class="k" x="1" y="1" width="17" height="17"/><path class="k" d="M9 1v17M9 9h9M13 9v9"/></g>
<g transform="translate(1044 357)"><circle cx="9" cy="8" r="6.500" fill="#3a9a63" stroke="#333"/><path d="M5 5l4-2 1 4-3 3zM11 9l3 1-2 3z" fill="#fff"/><path class="k" d="M15 3c2 5 0 10-5 12M9 15v3M5 18h8"/></g>
<g transform="translate(1071 357)"><path d="M1 3l6-1 1 6 10 1v6c-5 3-9 3-13 2z" fill="#8d8d8d"/><path d="M1 3l6-1 1 6-1 6-4 2z" fill="#63a9e3"/><path d="M11 3l7-1v7l-8-1z" fill="#888" stroke="#333" stroke-width=".5"/><path d="M1 3l6-1 4 1 7-1v13c-5 3-9 3-13 2z" fill="none" stroke="#333"/></g>
<g transform="translate(1100 357)"><path d="M10 0L18 19l-8-5-9 5z" fill="#2f7fb9"/><path d="M10 0v14l8 5z" fill="#7bb9e6"/></g>
<g transform="translate(1128 357)"><path d="M2 15a8 8 0 0 1 4-7l3 4z" class="g"/><path d="M6 8a8 8 0 0 1 6 0l-2 4z" fill="#444"/><path d="M12 8a8 8 0 0 1 5 7h-5z" class="b"/><path class="k" d="M1 16a9 9 0 0 1 17 0M10 14l2-5"/></g>
<g transform="translate(1156 357)"><rect x=".5" y="2.500" width="18" height="14" fill="#d7eaf7" stroke="#333"/><path d="M2 15h15" stroke="#5e9fd1"/></g>
<text x="1165" y="372" font-size="9.500" fill="#3b85ba" text-anchor="middle" textLength="15" lengthAdjust="spacingAndGlyphs">123</text>

<g transform="translate(1016 385)"><rect x=".5" y=".5" width="17" height="17" class="k"/><path d="M4 5h10M4 9h7M4 13h9" stroke="#3b85ba" stroke-width="1.500"/></g>
<g transform="translate(1044 385)"><rect x=".5" y="1.500" width="18" height="15" class="k"/><path d="M4 5l3 6H1z" fill="#2f9e62" transform="translate(2 0)"/><path d="M10 5h6l-3 6z" fill="#d9534f"/><path d="M3 13h13" stroke="#999"/></g>
<g transform="translate(1071 385)"><path class="k" d="M.5 16V.5h17v8M.5 4h17M3 7h4v3H3zM3 12h4v3H3z"/><path class="k" d="M9 10h9l-3.500 4v4l-2-2v-2z"/></g>
<g transform="translate(1100 385)"><rect x=".5" y=".5" width="17" height="17" class="kl"/><path class="kl" d="M.5 6h17M.5 12h17M6 .5v17M12 .5v17"/></g>
<g transform="translate(1128 385)"><rect x=".5" y=".5" width="17" height="17" fill="#d4d4d4" stroke="#444"/><rect class="b" x="1" y="6.500" width="5" height="5"/><rect class="b" x="6.500" y="6.500" width="5" height="5"/><rect class="b" x="6.500" y="12" width="5" height="5"/><rect class="b" x="12" y="12" width="5" height="5"/><path class="kl" d="M.5 6h17M.5 12h17M6 .5v17M12 .5v17"/></g>
<text x="1165" y="400" font-size="15" font-weight="bold" fill="#2f7fb9" text-anchor="middle">R</text>

<text x="1025" y="428" font-size="16" font-weight="bold" fill="#2f7fb9" text-anchor="middle">Py</text>
<g transform="translate(1044 412)"><path class="k" d="M.5 0v17.500H18M3 4h6M3 9h4M7 13h2"/><circle cx="13" cy="4" r="1.800" fill="none" stroke="#3b85ba"/><rect x="9" y="7.500" width="3" height="3" class="kl"/><path class="kl" d="M9 4h2"/></g>
<g transform="translate(1071 412)"><rect class="b" x="0" y="6" width="6" height="6"/><rect class="b" x="12" y="0" width="6" height="5"/><rect class="b" x="12" y="6.500" width="6" height="5"/><rect class="b" x="12" y="13" width="6" height="5"/><path d="M6 9h6M9 2.500h3M9 15.500h3M9 2.500v13" fill="none" stroke="#1f6fa8"/></g>
<g transform="translate(1100 412)"><path d="M.5 1.500h17v11h-11l-3 4v-4h-3z" fill="none" stroke="#3b85ba"/></g>
<g transform="translate(1128 412)"><path class="k" d="M2.500 .5h9l4 4v13h-13zM11.500 .5v4h4"/><circle cx="6" cy="8" r="1" fill="#3b85ba"/><path d="M8 8h5M8 12h5" stroke="#3b85ba"/><circle cx="6" cy="12" r="1" fill="#3b85ba"/></g>
<g transform="translate(1156 412)"><path class="k" d="M4.500 .5h10v6a5 5 0 0 1-10 0zM4.500 2H.5c0 4 1 6 4 7M14.500 2h4c0 4-1 6-4 7M9.500 11.500v4M5 17.500h9"/><path d="M6 16h7v2H6z" fill="#3b85ba"/><path d="M5.500 2h8v4a4 4 0 0 1-8 0z" fill="#d7d7d7"/></g>

<g transform="translate(1016 441)"><path class="k" d="M2.500 .5h9l4 4v14h-13zM11.500 .5v4h4"/><rect x="5" y="13" width="2" height="3" fill="#333"/><rect x="8" y="10" width="2" height="6" fill="#333"/><rect x="11" y="12" width="2" height="4" fill="#333"/></g>
<g transform="translate(1044 441)"><rect x="1.500" y="5" width="17" height="13" class="k"/><path d="M6 0l-5 7h3l-2 5 6-7H5l2-5z" fill="#f2b53a" stroke="#b76a10" stroke-width=".5"/></g>
<text x="1056" y="457" font-size="9" fill="#3b85ba" text-anchor="middle">23</text>
<g transform="translate(1071 441)"><rect x="8" y=".5" width="6" height="6" class="kl"/><rect x="1" y="8" width="6" height="6" class="kl"/><path class="k" d="M8.500 10h10l-4 4v4l-2-2v-2z"/><path d="M5 0L0 7h3L1 12l6-7H4l2-5z" fill="#f2b53a" stroke="#b76a10" stroke-width=".5"/></g>
<g transform="translate(1099 441)"><path class="k" d="M1 4h15v5M1 4v13h8"/><path class="k" d="M9 10h10l-4 4v4l-2-2v-2z"/><path d="M6 15l3-7 2 5" fill="none" stroke="#3b85ba"/><path d="M5 0L0 7h3L1 12l6-7H4l2-5z" fill="#f2b53a" stroke="#b76a10" stroke-width=".5"/></g>
<g transform="translate(1128 441)"><path class="k" d="M1 3h14v5M1 3v14h7M4 10h4v4H4z"/><path class="k" d="M9 10h9l-4 4v4l-2-2v-2z"/><path d="M5 0L0 7h3L1 12l6-7H4l2-5z" fill="#f2b53a" stroke="#b76a10" stroke-width=".5"/></g>
<g transform="translate(1156 440)"><rect x="2" y="3" width="16" height="15" fill="#dcebf6" stroke="#3b85ba"/><path d="M6 18c0-5 3-4 5-8s3-5 7-5" fill="none" stroke="#2f7fb9" stroke-width="2"/><path d="M0 1h7v5l-3.500 4L0 6z" fill="#d97a2b"/><circle cx="16" cy="15" r="3" fill="#d97a2b"/></g>

<g transform="translate(1016 469)" fill="none" stroke="#a638a8" stroke-width="1.200"><path d="M9 .5L14 5 9 9.500 4 5zM4 5L-.0 9 4 14 9 9.500M14 5L18 9 14 14 9 9.500M4 14l5 4.500L14 14"/></g>
<g transform="translate(1044 469)" fill="#d5edfa" stroke="#2d86c1"><path d="M0 2h8l6 7.500-6 7.500H0l6-7.500z"/><path d="M10 2h3l6 7.500-6 7.500h-3l6-7.500z"/></g>
<g fill="#444"><circle cx="1075" cy="477.500" r="1.100"/><circle cx="1081" cy="477.500" r="1.100"/><circle cx="1087" cy="477.500" r="1.100"/></g>

<!-- vis lower -->
<text class="v" x="1017" y="518" textLength="34" lengthAdjust="spacingAndGlyphs">Values</text>
<rect x="1009.500" y="528.500" width="169" height="26" fill="#fff" stroke="#bdbdbd" stroke-dasharray="3 2"/>
<text class="v" x="1020" y="546" textLength="107" lengthAdjust="spacingAndGlyphs">Add data fields here</text>
<text class="v" x="1017" y="578" font-weight="bold" textLength="70" lengthAdjust="spacingAndGlyphs">Drill through</text>
<text class="v" x="1017" y="603" textLength="67" lengthAdjust="spacingAndGlyphs">Cross-report</text>
<rect x="1131.500" y="591.500" width="31" height="15" rx="7.500" fill="#fff" stroke="#666"/><circle cx="1140" cy="599" r="4" fill="#666"/><text x="1145" y="603" font-size="9.500" fill="#666">Off</text>
<text class="v" x="1017" y="630" textLength="74" lengthAdjust="spacingAndGlyphs">Keep all filters</text>
<rect x="1131" y="618" width="32" height="16" rx="8" fill="#117865"/><circle cx="1155" cy="626" r="4" fill="#fff"/><text x="1136" y="630" font-size="9.500" font-weight="bold" fill="#fff">On</text>
<rect x="1009.500" y="644.500" width="169" height="25" fill="#fff" stroke="#bdbdbd" stroke-dasharray="3 2"/>
<text class="v" x="1018" y="662" textLength="150" lengthAdjust="spacingAndGlyphs">Add drill-through fields here</text>

<!-- data pane -->
<rect x="1186" y="161" width="180" height="544" fill="#f3f2f1"/>
<text x="1194" y="184" font-size="15" font-weight="bold" fill="#333" textLength="33" lengthAdjust="spacingAndGlyphs">Data</text>
<path d="M1346 173l6 6-6 6M1352 173l6 6-6 6" fill="none" stroke="#333" stroke-width="1.200"/>
<rect x="1191" y="206" width="170.500" height="23" rx="3" fill="#fff" stroke="#d4d4d4"/>
<circle cx="1209" cy="216" r="5" fill="none" stroke="#666"/><path d="M1213 220l3.500 3.500" stroke="#666"/>
<text x="1224" y="222" font-size="13" fill="#666" textLength="41" lengthAdjust="spacingAndGlyphs">Search</text>
<rect x="1354" y="237" width="8" height="264" fill="#8a8a8a"/>

<g>
<use href="#chev" x="1201" y="245" width="8" height="12"/><use href="#chev" x="1201" y="269" width="8" height="12"/><use href="#chev" x="1201" y="293" width="8" height="12"/><use href="#chev" x="1201" y="317" width="8" height="12"/><use href="#chev" x="1201" y="341" width="8" height="12"/><use href="#chev" x="1201" y="365" width="8" height="12"/><use href="#chev" x="1201" y="389" width="8" height="12"/><use href="#chev" x="1201" y="413" width="8" height="12"/><use href="#chev" x="1201" y="437" width="8" height="12"/><use href="#chev" x="1201" y="461" width="8" height="12"/><use href="#chev" x="1201" y="485" width="8" height="12"/><use href="#chev" x="1201" y="509" width="8" height="12"/><use href="#chev" x="1201" y="533" width="8" height="12"/><use href="#chev" x="1201" y="557" width="8" height="12"/><use href="#chev" x="1201" y="581" width="8" height="12"/><use href="#chev" x="1201" y="605" width="8" height="12"/><use href="#chev" x="1201" y="629" width="8" height="12"/><use href="#chev" x="1201" y="653" width="8" height="12"/><use href="#chev" x="1201" y="677" width="8" height="12"/>
<use href="#tbl" x="1215" y="269" width="12" height="12"/><use href="#tbl" x="1215" y="293" width="12" height="12"/><use href="#tbl" x="1215" y="317" width="12" height="12"/><use href="#tbl" x="1215" y="341" width="12" height="12"/><use href="#tbl" x="1215" y="365" width="12" height="12"/><use href="#tbl" x="1215" y="389" width="12" height="12"/><use href="#tbl" x="1215" y="413" width="12" height="12"/><use href="#tbl" x="1215" y="437" width="12" height="12"/><use href="#tbl" x="1215" y="461" width="12" height="12"/><use href="#tbl" x="1215" y="485" width="12" height="12"/><use href="#tbl" x="1215" y="509" width="12" height="12"/><use href="#tbl" x="1215" y="533" width="12" height="12"/><use href="#tbl" x="1215" y="557" width="12" height="12"/><use href="#tbl" x="1215" y="581" width="12" height="12"/><use href="#tbl" x="1215" y="605" width="12" height="12"/><use href="#tbl" x="1215" y="629" width="12" height="12"/><use href="#tbl" x="1215" y="653" width="12" height="12"/><use href="#tbl" x="1215" y="677" width="12" height="12"/>
<g fill="none" stroke="#333" stroke-width=".9"><path d="M1215.500 245.500h7v12h-7zM1215.500 249.500h7M1219 245.500v12"/><rect x="1221" y="250.500" width="6.500" height="7" fill="#f3f2f1"/><path d="M1221 253h6.500M1221 255.500h6.500M1224 250.500v7"/></g>
</g>
<g class="f">
<text class="f" x="1233" y="255" textLength="56" lengthAdjust="spacingAndGlyphs">_Measures</text>
<text class="f" x="1233" y="279" textLength="78" lengthAdjust="spacingAndGlyphs">(NLP) methods</text>
<text class="f" x="1233" y="303" textLength="46" lengthAdjust="spacingAndGlyphs">activities</text>
<text class="f" x="1233" y="327" textLength="117" lengthAdjust="spacingAndGlyphs">AutoML_Categories_...</text>
<text class="f" x="1233" y="351" textLength="117" lengthAdjust="spacingAndGlyphs">AutoML_Categories_...</text>
<text class="f" x="1233" y="375" textLength="118" lengthAdjust="spacingAndGlyphs">AutoML_Tools_Intere...</text>
<text class="f" x="1233" y="399" textLength="105" lengthAdjust="spacingAndGlyphs">AutoML_Tools_Used</text>
<text class="f" x="1233" y="423" textLength="100" lengthAdjust="spacingAndGlyphs">BI_Tools_Interested</text>
<text class="f" x="1233" y="447" textLength="94" lengthAdjust="spacingAndGlyphs">big data products</text>
<text class="f" x="1233" y="471" textLength="118" lengthAdjust="spacingAndGlyphs">BigData_Tools_Intere...</text>
<text class="f" x="1233" y="495" textLength="117" lengthAdjust="spacingAndGlyphs">business intelligence...</text>
<text class="f" x="1233" y="519" textLength="114" lengthAdjust="spacingAndGlyphs">Cloud_Platforms_Int...</text>
<text class="f" x="1233" y="543" textLength="116" lengthAdjust="spacingAndGlyphs">Cloud_Products_Inte...</text>
<text class="f" x="1233" y="567" textLength="117" lengthAdjust="spacingAndGlyphs">computer vision met...</text>
<text class="f" x="1233" y="591" textLength="111" lengthAdjust="spacingAndGlyphs">computing platforms</text>
<text class="f" x="1233" y="615" textLength="107" lengthAdjust="spacingAndGlyphs">computing products</text>
<text class="f" x="1233" y="639" textLength="116" lengthAdjust="spacingAndGlyphs">data visualization lib...</text>
<text class="f" x="1233" y="663" textLength="118" lengthAdjust="spacingAndGlyphs">Favorite_Media_Sour...</text>
<text class="f" x="1233" y="687" textLength="114" lengthAdjust="spacingAndGlyphs">hosted notebook pr...</text>
</g>

<!-- page tabs -->
<rect x="41" y="668" width="127.500" height="35" fill="#f3f2f1"/>
<rect x="169" y="668" width="796" height="35" fill="#fff"/>
<rect x="168" y="668" width="1" height="35" fill="#cfcfcf"/><rect x="405" y="668" width="1" height="35" fill="#dcdcdc"/><rect x="580" y="668" width="1" height="35" fill="#dcdcdc"/><rect x="763.500" y="668" width="1" height="35" fill="#dcdcdc"/>
<rect x="406" y="699" width="174" height="4" fill="#117865"/>
<rect x="41" y="703" width="925" height="1" fill="#d5d5d5"/>
<rect x="965" y="668" width="39" height="35" fill="#117865"/><path d="M984.500 680v12M978.500 686h12" stroke="#fff" stroke-width="2.500"/>
<rect x="54.500" y="675.500" width="18" height="12" fill="none" stroke="#444"/><path d="M63.500 688v3M58.500 691.500h10" stroke="#444"/><rect x="51" y="696" width="24" height="2.500" rx="1" fill="#117865"/>
<rect x="101.500" y="673.500" width="11" height="20" rx="1" fill="none" stroke="#555"/><rect x="106" y="690" width="2" height="1.500" fill="#555"/>
<path d="M139 686l-3-3.500v7z" fill="#c8c8c8"/><path d="M157 683l4 3.500-4 3.500z" fill="#111"/>
<text class="ar" x="287" y="692" textLength="196" lengthAdjust="spacingAndGlyphs">تحليل زمن الاجابة و التحليلات ديموغرافية</text>
<text class="ar" x="493" y="692" textLength="134" lengthAdjust="spacingAndGlyphs">المؤهلات والمراكز الوظيفية</text>
<text class="ar" x="671.500" y="692" textLength="141" lengthAdjust="spacingAndGlyphs">التقنيات والادوات المستخدمة</text>
<text class="ar" x="872" y="692" textLength="176" lengthAdjust="spacingAndGlyphs">الاحصائيات المهنية والمالية للشركات</text>
<text x="573" y="681" font-size="10" font-weight="bold" fill="#222" text-anchor="middle">x</text>

<!-- status bar -->
<rect y="704" width="1366" height="23" fill="#f3f2f1"/>
<rect y="705" width="1366" height=".8" fill="#e3e3e3"/>
<text x="4" y="721" font-size="12" fill="#444" textLength="66" lengthAdjust="spacingAndGlyphs">Page 2 of 11</text>
<path d="M1154 716h4M1163 716h100" stroke="#555"/><rect x="1194" y="710" width="4" height="11" fill="#555"/><path d="M1213.500 713v6" stroke="#555"/><path d="M1273 712v8M1269 716h8" stroke="#555"/>
<text x="1290" y="721" font-size="12" fill="#555" textLength="23" lengthAdjust="spacingAndGlyphs">69%</text>
<path d="M1333.500 714v-4h5M1343 710h5v4M1348 718v4h-5M1338 722h-4.500v-4" fill="none" stroke="#444"/>

<!-- taskbar -->
<rect y="727" width="1366" height="41" fill="#1a2130"/>
<rect y="727" width="1366" height="1" fill="#0a0d14"/>
<g fill="#fff"><path d="M16 741l7-1v7.500h-7zM24 739.800l8.500-1.300v9h-8.500zM16 748.500h7v7.500l-7-1zM24 748.500h8.500v9l-8.500-1.300z"/></g>
<rect x="48" y="729" width="289" height="39" fill="#2b2f35" stroke="#555"/>
<circle cx="71" cy="746" r="5.500" fill="none" stroke="#eee" stroke-width="1.100"/><path d="M67 750l-5 6" stroke="#eee" stroke-width="1.100"/>
<text x="88" y="754" font-size="14.500" fill="#ddd" textLength="128" lengthAdjust="spacingAndGlyphs">Type here to search</text>
<path d="M289 736l3 9 9 3-9 3-3 9-3-9-9-3 9-3z" fill="#f6c435"/><path d="M311 743l2 5 4 2-4 2-2 5-2-5-4-2 4-2z" fill="#f6c435"/><path d="M269 753l1.500 3 3 1.500-3 1.500-1.500 3-1.500-3-3-1.500 3-1.500z" fill="#3a9ae0"/><circle cx="305" cy="738" r="1.500" fill="#e0643a"/><circle cx="322" cy="757" r="1.500" fill="#7fbf3a"/>

<!-- task icons -->
<rect x="780" y="729" width="48" height="39" fill="#3a3f48"/>
<g fill="#6fe0c2"><rect x="343" y="765" width="40" height="3"/><rect x="392" y="765" width="40" height="3"/><rect x="490" y="765" width="40" height="3"/><rect x="539" y="765" width="40" height="3"/><rect x="588" y="765" width="40" height="3"/><rect x="637" y="765" width="40" height="3"/><rect x="692" y="765" width="35" height="3"/><rect x="735" y="765" width="40" height="3"/><rect x="780" y="765" width="48" height="3"/></g>
<path d="M352 739h9l2 3h9v15h-20z" fill="#f4b93d"/><rect x="352" y="744" width="20" height="13" fill="#f8d56c"/><rect x="358" y="751" width="8" height="6" fill="#3a8fd6"/>
<circle cx="412" cy="748" r="12" fill="#dd4a3b"/><path d="M412 748l-10.400 6 5 6.500c4 1.500 11 1 14-2 1-1 3-5 3-6z" fill="#35a853"/><path d="M412 736c6 0 10 3 12 12h-12z" fill="#f9c200"/><path d="M424 748c0 6-5 12-12 12l6-12z" fill="#fcc934"/><circle cx="412" cy="748" r="5.500" fill="#fff"/><circle cx="412" cy="748" r="4.300" fill="#3c85e6"/>
<text x="461" y="755" font-size="18" font-weight="bold" fill="#1aa06d" text-anchor="middle">W</text><text x="471" y="746" font-size="9" font-weight="bold" fill="#1aa06d">3</text>
<circle cx="510" cy="748" r="12" fill="#1e8fdc"/><path d="M498 747c2-8 12-13 19-9s8 9 5 12c-3 3-10 1-12-1s-8-6-12-2z" fill="#35c16f"/><circle cx="511" cy="750" r="3.500" fill="#1a2130"/><rect x="499" y="752" width="12" height="9" rx="1" fill="#c56a1e"/><rect x="499" y="755" width="12" height="1" fill="#f0c080"/>
<path d="M566 736l-14 12 14 12 4-2v-20z" fill="#0e7dc7"/><path d="M566 736v24l4-2v-20z" fill="#3aa5ee"/><path d="M550 743l-2 1 4 4-4 4 2 1 7-5z" fill="#0a5c97"/>
<g fill="none" stroke="#fff" stroke-width="1.300"><ellipse cx="605" cy="748" rx="11" ry="5.500" transform="rotate(30 605 748)"/><ellipse cx="605" cy="748" rx="11" ry="5.500" transform="rotate(-30 605 748)"/><ellipse cx="605" cy="748" rx="11" ry="5.500" transform="rotate(90 605 748)"/></g>
<circle cx="655" cy="748" r="11" fill="none" stroke="#2bb741" stroke-width="2"/><path d="M650 743c1 6 5 9 10 10" fill="none" stroke="#2bb741" stroke-width="2"/>
<circle cx="706" cy="748" r="12" fill="#dd4a3b"/><path d="M706 748l-10.400 6 5 6.500c4 1.500 11 1 14-2 1-1 3-5 3-6z" fill="#35a853"/><path d="M706 736c6 0 10 3 12 12h-12z" fill="#f9c200"/><circle cx="706" cy="748" r="5.500" fill="#fff"/><circle cx="706" cy="748" r="4.300" fill="#3c85e6"/>
<rect x="744" y="737" width="22" height="18" rx="1" fill="#cfe1f0"/><rect x="744" y="737" width="22" height="4" fill="#2d6fb6"/><path d="M747 744h16M747 748h16" stroke="#5a8ab8"/><rect x="750" y="755" width="15" height="7" fill="#8a8f98"/>
<rect x="797" y="739" width="7" height="18" fill="#f2c811" transform="translate(-3 0)"/><rect x="804" y="733" width="7" height="24" fill="#e6ac0c" transform="translate(-3 0)"/><rect x="794" y="746" width="7" height="11" fill="#f7dc6e"/><rect x="801" y="740" width="7" height="17" fill="#f2c811"/><rect x="808" y="733" width="6" height="24" fill="#d99e0b"/>

<!-- taskbar right -->
<circle cx="1053" cy="749" r="10.500" fill="#f2a62a"/><circle cx="1046" cy="744" r="9" fill="#1a2130"/><ellipse cx="1046" cy="742" rx="9" ry="5" fill="#a9cdf0"/>
<path d="M1092 751l5-5 5 5" fill="none" stroke="#ddd" stroke-width="1.200"/>
<g fill="none" stroke="#e8e8e8"><rect x="1115" y="745" width="13" height="9"/><rect x="1122" y="746.500" width="5" height="6" fill="#e8e8e8"/><path d="M1116 741v3M1120 741v3"/>
<path d="M1141 755a11 11 0 0 1 11-11M1144 755a8 8 0 0 1 8-8M1147 755a5 5 0 0 1 5-5"/><circle cx="1151" cy="754" r="1.500" fill="#e8e8e8"/>
<path d="M1162 746h3l4-4v14l-4-4h-3zM1172 745c2 2 2 6 0 8M1175 742c3 4 3 10 0 14"/>
<rect x="1185.500" y="741.500" width="21.500" height="14"/><path d="M1188 744.500h17M1188 747.500h17M1188 750.500h17" stroke-dasharray="1.500 1"/><path d="M1191 753.500h11"/></g>
<text x="1231" y="754" font-family="DejaVu Sans" font-size="13" fill="#e8e8e8" text-anchor="middle">ع</text>
<text x="1281" y="744" font-size="12.500" fill="#e8e8e8" text-anchor="middle" textLength="43" lengthAdjust="spacingAndGlyphs">2:07 AM</text>
<text x="1281" y="762" font-size="12.500" fill="#e8e8e8" text-anchor="middle" textLength="57" lengthAdjust="spacingAndGlyphs">10/17/2025</text>
<path d="M1325 741h15v12h-15z" fill="#fff"/><path d="M1328 744h9M1328 747h9M1328 750h6" stroke="#333"/>
<circle cx="1340" cy="755" r="7.500" fill="#2a303c" stroke="#9a9a9a" stroke-width="1.200"/><text x="1340" y="759" font-size="10" font-weight="bold" fill="#c8c8c8" text-anchor="middle">1</text>

<!-- watermark -->
<text x="672" y="728" font-family="DejaVu Sans" font-weight="bold" font-size="44" fill="#9a9a9a" fill-opacity=".27" text-anchor="middle" textLength="146" lengthAdjust="spacingAndGlyphs" direction="rtl">نفذلي</text>
<text x="597" y="761" font-size="31" font-weight="bold" fill="#fff" fill-opacity=".6" stroke="#777" stroke-opacity=".4" stroke-width=".5" textLength="165" lengthAdjust="spacingAndGlyphs">nafezly.com</text>
</svg>
</body></html>
